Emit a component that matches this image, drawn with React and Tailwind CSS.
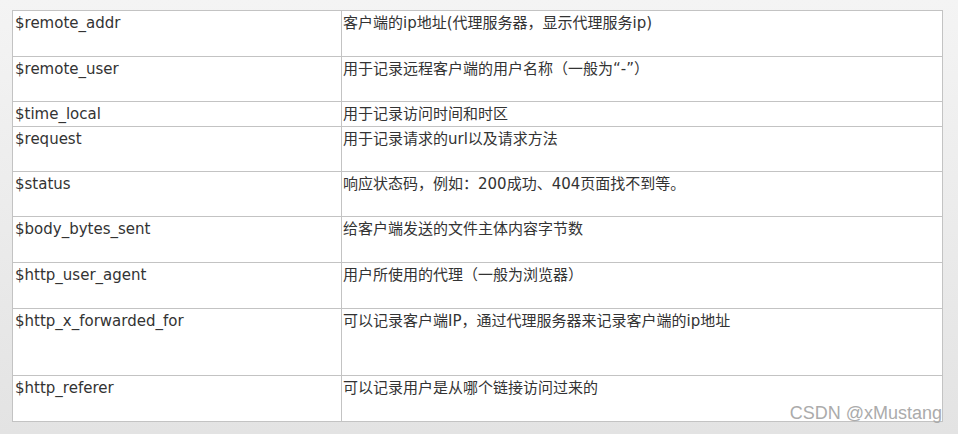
import React from "react";

const rows = [
  ["$remote_addr", "客户端的ip地址(代理服务器，显示代理服务ip)", "h-[45px]"],
  ["$remote_user", "用于记录远程客户端的用户名称（一般为“-”）", "h-[45px] border-t"],
  ["$time_local", "用于记录访问时间和时区", "h-[25px] border-t"],
  ["$request", "用于记录请求的url以及请求方法", "h-[45px] border-t"],
  ["$status", "响应状态码，例如：200成功、404页面找不到等。", "h-[45px] border-t"],
  ["$body_bytes_sent", "给客户端发送的文件主体内容字节数", "h-[46px] border-t"],
  ["$http_user_agent", "用户所使用的代理（一般为浏览器）", "h-[46px] border-t"],
  ["$http_x_forwarded_for", "可以记录客户端IP，通过代理服务器来记录客户端的ip地址", "h-[67px] border-t"],
  ["$http_referer", "可以记录用户是从哪个链接访问过来的", "h-[46px] border-t"],
];

export default function App() {
  return (
    <div className="relative w-[958px] h-[434px] overflow-hidden bg-gradient-to-b from-[#f4f4f4] to-[#e3e3e3] pt-[10px] pl-[12px]">
      <div className="w-[931px] border border-[#c3c3c3] bg-white text-[#333] font-['DejaVu_Sans','Noto_Sans_CJK_SC',sans-serif] text-[15px] leading-[20px]">
        {rows.map(([k, v, cls]) => (
          <div key={k} className={`flex border-[#c3c3c3] ${cls}`}>
            <div className="w-[329px] shrink-0 border-r border-[#c3c3c3] pl-[2px] pt-[2px]">
              {k}
            </div>
            <div className="flex-1 pl-[1px] pt-[2px]">{v}</div>
          </div>
        ))}
      </div>
      <div className="absolute right-[16px] top-[402px] font-['Liberation_Sans',sans-serif] text-[18px] leading-[22px] text-[#ababab]">
        CSDN @xMustang
      </div>
    </div>
  );
}
